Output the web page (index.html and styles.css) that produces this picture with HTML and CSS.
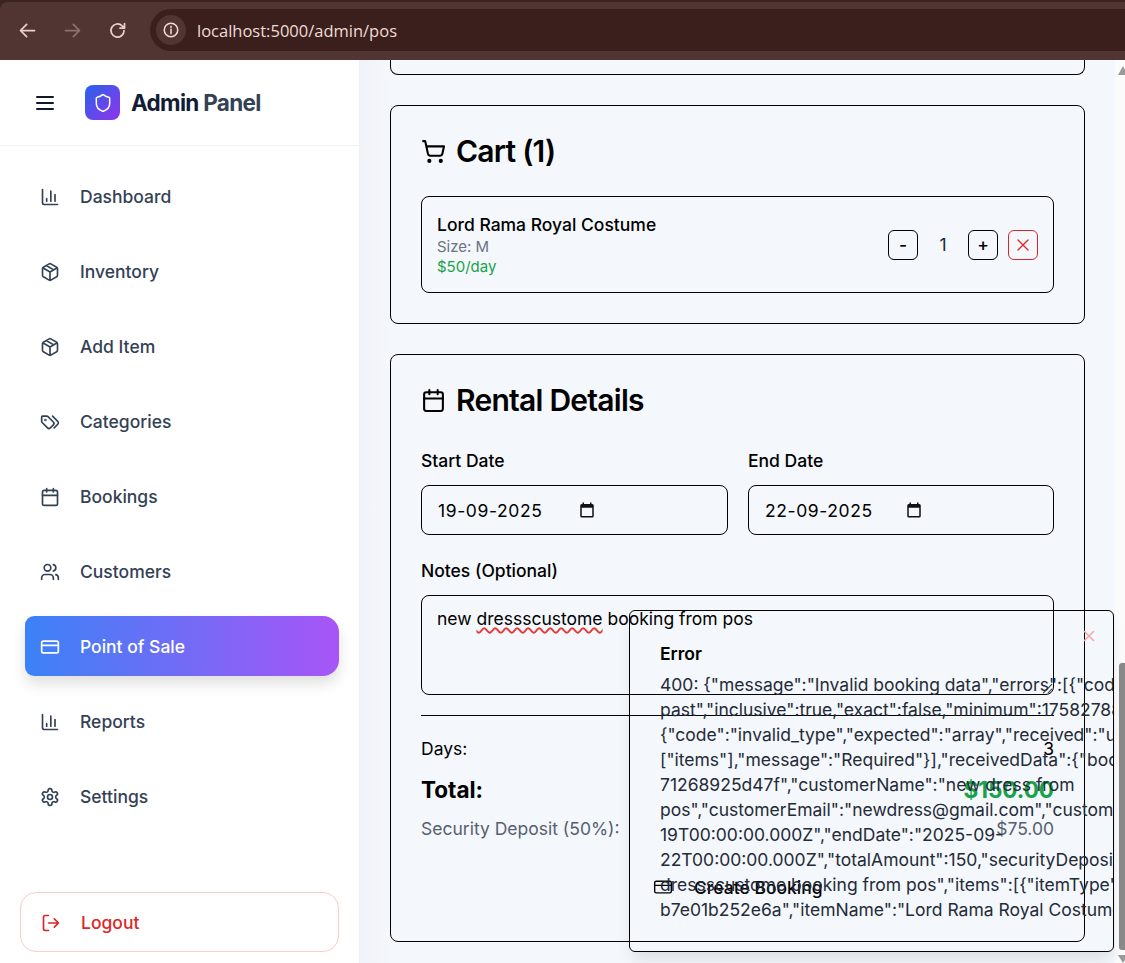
FILE: index.html
```html
<!DOCTYPE html>
<html lang="en">
<head>
    <meta charset="UTF-8">
    <meta name="viewport" content="width=device-width, initial-scale=1.0">
    <title>Point of Sale</title>
    <link rel="stylesheet" href="styles.css">
</head>
<body>

<div class="browserFrame">
    <div class="browserBar">
        <svg class="navIcon" viewBox="0 0 24 24"><path d="M20 12H4M11 5l-7 7 7 7"/></svg>
        <svg class="navIcon navIconOff" viewBox="0 0 24 24"><path d="M4 12h16M13 5l7 7-7 7"/></svg>
        <svg class="navIcon navIconLast" viewBox="0 0 24 24"><path d="M19.5 12a7.5 7.5 0 1 1-2.2-5.3L20 9.2M20 4v5.2h-5.2"/></svg>
        <div class="urlPill">
            <span class="infoBadge">
                <svg class="infoIcon" viewBox="0 0 24 24"><circle cx="12" cy="12" r="9"/><path d="M12 11v6M12 7v1.6"/></svg>
            </span>
            <span class="urlText">localhost:5000/admin/pos</span>
        </div>
    </div>
</div>

<div class="appShell">
    <aside class="sidebar">
        <div class="sideHead">
            <svg class="burger" viewBox="0 0 24 24"><path d="M4 6h16M4 12h16M4 18h16"/></svg>
            <span class="logoBox">
                <svg viewBox="0 0 24 24"><path d="M20 13c0 5-3.5 7.5-7.66 8.95a1 1 0 0 1-.67-.01C7.5 20.5 4 18 4 13V6a1 1 0 0 1 1-1c2 0 4.5-1.2 6.24-2.72a1.17 1.17 0 0 1 1.52 0C14.51 3.81 17 5 19 5a1 1 0 0 1 1 1z"/></svg>
            </span>
            <span class="brand">Admin <span class="brandSoft">Panel</span></span>
        </div>
        <nav class="sideNav">
            <a class="navItem"><svg viewBox="0 0 24 24"><path d="M3 3v16a2 2 0 0 0 2 2h16M18 17V9M13 17V5M8 17v-3"/></svg><span class="navLabel">Dashboard</span></a>
            <a class="navItem"><svg viewBox="0 0 24 24"><path d="M11 21.73a2 2 0 0 0 2 0l7-4A2 2 0 0 0 21 16V8a2 2 0 0 0-1-1.73l-7-4a2 2 0 0 0-2 0l-7 4A2 2 0 0 0 3 8v8a2 2 0 0 0 1 1.73zM12 22V12M3.3 7 12 12l8.7-5M7.5 4.27l9 5.15"/></svg><span class="navLabel">Inventory</span></a>
            <a class="navItem"><svg viewBox="0 0 24 24"><path d="M11 21.73a2 2 0 0 0 2 0l7-4A2 2 0 0 0 21 16V8a2 2 0 0 0-1-1.73l-7-4a2 2 0 0 0-2 0l-7 4A2 2 0 0 0 3 8v8a2 2 0 0 0 1 1.73zM12 22V12M3.3 7 12 12l8.7-5M7.5 4.27l9 5.15"/></svg><span class="navLabel">Add Item</span></a>
            <a class="navItem"><svg viewBox="0 0 24 24"><path d="m15 5 6.3 6.3a2.4 2.4 0 0 1 0 3.4L17 19"/><path d="M9.59 5.59A2 2 0 0 0 8.17 5H3a1 1 0 0 0-1 1v5.17a2 2 0 0 0 .59 1.42l6.42 6.42a2.43 2.43 0 0 0 3.42 0l3.58-3.58a2.43 2.43 0 0 0 0-3.42z"/><circle cx="6.5" cy="9.5" r=".5"/></svg><span class="navLabel">Categories</span></a>
            <a class="navItem"><svg viewBox="0 0 24 24"><rect x="3" y="4" width="18" height="18" rx="2"/><path d="M16 2v4M8 2v4M3 10h18"/></svg><span class="navLabel">Bookings</span></a>
            <a class="navItem"><svg viewBox="0 0 24 24"><path d="M16 21v-2a4 4 0 0 0-4-4H6a4 4 0 0 0-4 4v2"/><circle cx="9" cy="7" r="4"/><path d="M22 21v-2a4 4 0 0 0-3-3.87M16 3.13a4 4 0 0 1 0 7.75"/></svg><span class="navLabel">Customers</span></a>
            <a class="navItem navActive"><svg viewBox="0 0 24 24"><rect x="2" y="5" width="20" height="14" rx="2"/><path d="M2 10h20"/></svg><span class="navLabel">Point of Sale</span></a>
            <a class="navItem"><svg viewBox="0 0 24 24"><path d="M3 3v16a2 2 0 0 0 2 2h16M18 17V9M13 17V5M8 17v-3"/></svg><span class="navLabel">Reports</span></a>
            <a class="navItem"><svg viewBox="0 0 24 24"><path d="M12.22 2h-.44a2 2 0 0 0-2 2v.18a2 2 0 0 1-1 1.73l-.43.25a2 2 0 0 1-2 0l-.15-.08a2 2 0 0 0-2.73.73l-.22.38a2 2 0 0 0 .73 2.73l.15.1a2 2 0 0 1 1 1.72v.51a2 2 0 0 1-1 1.74l-.15.09a2 2 0 0 0-.73 2.73l.22.38a2 2 0 0 0 2.73.73l.15-.08a2 2 0 0 1 2 0l.43.25a2 2 0 0 1 1 1.73V20a2 2 0 0 0 2 2h.44a2 2 0 0 0 2-2v-.18a2 2 0 0 1 1-1.73l.43-.25a2 2 0 0 1 2 0l.15.08a2 2 0 0 0 2.73-.73l.22-.39a2 2 0 0 0-.73-2.73l-.15-.08a2 2 0 0 1-1-1.74v-.5a2 2 0 0 1 1-1.74l.15-.09a2 2 0 0 0 .73-2.73l-.22-.38a2 2 0 0 0-2.73-.73l-.15.08a2 2 0 0 1-2 0l-.43-.25a2 2 0 0 1-1-1.73V4a2 2 0 0 0-2-2z"/><circle cx="12" cy="12" r="3"/></svg><span class="navLabel">Settings</span></a>
        </nav>
        <a class="logoutBtn"><svg viewBox="0 0 24 24"><path d="M9 21H5a2 2 0 0 1-2-2V5a2 2 0 0 1 2-2h4M16 17l5-5-5-5M21 12H9"/></svg><span class="navLabel">Logout</span></a>
    </aside>

    <main class="content">
        <div class="card cardStub"></div>

        <section class="card cartCard">
            <h2 class="cardTitle">
                <svg viewBox="0 0 24 24"><circle cx="8" cy="21" r="1"/><circle cx="19" cy="21" r="1"/><path d="M2.05 2.05h2l2.66 12.42a2 2 0 0 0 2 1.58h9.78a2 2 0 0 0 1.95-1.57l1.65-7.43H5.12"/></svg>
                Cart (1)
            </h2>
            <div class="cartItem">
                <div class="itemInfo">
                    <div class="itemName">Lord Rama Royal Costume</div>
                    <div class="itemSize">Size: M</div>
                    <div class="itemPrice">$50/day</div>
                </div>
                <div class="itemControls">
                    <button class="qtyBtn">-</button>
                    <span class="qtyValue">1</span>
                    <button class="qtyBtn">+</button>
                    <button class="qtyBtn removeBtn"><svg viewBox="0 0 24 24"><path d="M18 6 6 18M6 6l12 12"/></svg></button>
                </div>
            </div>
        </section>

        <section class="card rentalCard">
            <h2 class="cardTitle">
                <svg viewBox="0 0 24 24"><rect x="3" y="4" width="18" height="18" rx="2"/><path d="M16 2v4M8 2v4M3 10h18"/></svg>
                Rental Details
            </h2>
            <div class="dateRow">
                <div class="field">
                    <label class="fieldLabel">Start Date</label>
                    <div class="dateBox">
                        <span class="dateText">19-09-2025</span>
                        <svg class="dateIcon" viewBox="0 0 24 24"><path d="M19 4h-1V2h-2v2H8V2H6v2H5a2 2 0 0 0-2 2v14a2 2 0 0 0 2 2h14a2 2 0 0 0 2-2V6a2 2 0 0 0-2-2zm0 16H5V9h14z"/></svg>
                    </div>
                </div>
                <div class="field">
                    <label class="fieldLabel">End Date</label>
                    <div class="dateBox">
                        <span class="dateText">22-09-2025</span>
                        <svg class="dateIcon" viewBox="0 0 24 24"><path d="M19 4h-1V2h-2v2H8V2H6v2H5a2 2 0 0 0-2 2v14a2 2 0 0 0 2 2h14a2 2 0 0 0 2-2V6a2 2 0 0 0-2-2zm0 16H5V9h14z"/></svg>
                    </div>
                </div>
            </div>
            <label class="fieldLabel">Notes (Optional)</label>
            <div class="notesBox">
                new <span class="misspelt">dressscustome</span> booking from pos
                <svg class="resizeGrip" viewBox="0 0 10 10"><path d="M9 2 2 9M9 6 6 9"/></svg>
            </div>
            <div class="summary">
                <div class="sumRow sumDays"><span>Days:</span><span>3</span></div>
                <div class="sumRow sumTotal"><span>Total:</span><span class="sumGreen">$150.00</span></div>
                <div class="sumRow sumDeposit"><span>Security Deposit (50%):</span><span>$75.00</span></div>
            </div>
            <div class="createBtn">
                <svg viewBox="0 0 24 24"><rect x="2" y="5" width="20" height="14" rx="2"/><path d="M2 10h20"/></svg>
                <span class="createLabel">Create Booking</span>
            </div>
        </section>
    </main>

    <div class="scrollTrack">
        <span class="arrowUp"></span>
        <span class="scrollThumb"></span>
        <span class="arrowDown"></span>
    </div>
</div>

<div class="toast">
    <svg class="toastClose" viewBox="0 0 24 24"><path d="M18 6 6 18M6 6l12 12"/></svg>
    <div class="toastTitle">Error</div>
    <div class="toastLine">400: {"message":"Invalid booking data","errors":[{"code":"too_small"</div>
    <div class="toastLine">past","inclusive":true,"exact":false,"minimum":1758278880000</div>
    <div class="toastLine">{"code":"invalid_type","expected":"array","received":"undefined"</div>
    <div class="toastLine">["items"],"message":"Required"}],"receivedData":{"bookingId"</div>
    <div class="toastLine">71268925d47f","customerName":"new dress from</div>
    <div class="toastLine">pos","customerEmail":"newdress@gmail.com","customerPhone"</div>
    <div class="toastLine">19T00:00:00.000Z","endDate":"2025-09-</div>
    <div class="toastLine">22T00:00:00.000Z","totalAmount":150,"securityDeposit":75</div>
    <div class="toastLine">dressscustome booking from pos","items":[{"itemType":"costume"</div>
    <div class="toastLine">b7e01b252e6a","itemName":"Lord Rama Royal Costume"</div>
</div>

</body>
</html>
```

FILE: styles.css
```css
* {
    box-sizing: border-box;
}

body {
    font-family: 'Inter', sans-serif;
    margin: 0;
    height: 963px;
    overflow: hidden;
    color: #000;
    background-color: #f4f7fb;
}

svg {
    fill: none;
    stroke: currentColor;
    stroke-width: 2;
    stroke-linecap: round;
    stroke-linejoin: round;
    flex-shrink: 0;
}

/* browser chrome */
.browserFrame {
    background-color: #3a2320;
    padding-top: 2px;
}

.browserBar {
    height: 58px;
    background-color: #513533;
    border-radius: 8px 0 0 0;
    display: flex;
    align-items: center;
    padding: 0 0 2px 17px;
}

.navIcon {
    width: 21px;
    height: 21px;
    color: #eccfc8;
    margin-right: 24px;
}

.navIconOff {
    color: #8f706b;
}

.navIconLast {
    margin-right: 22px;
}

.urlPill {
    flex: 1;
    height: 42px;
    border-radius: 21px 0 0 21px;
    background-color: #3a1f1c;
    display: flex;
    align-items: center;
    padding-left: 6px;
}

.infoBadge {
    width: 30px;
    height: 30px;
    border-radius: 50%;
    background-color: #513533;
    display: flex;
    align-items: center;
    justify-content: center;
}

.infoIcon {
    width: 18px;
    height: 18px;
    color: #f3dcd6;
}

.urlText {
    font-family: 'Open Sans', sans-serif;
    font-size: 16.5px;
    color: #f0dcd7;
    margin-left: 11px;
}

.appShell {
    display: flex;
    height: 903px;
}

/* sidebar */
.sidebar {
    width: 360px;
    background-color: #fff;
    border-right: 1px solid #eef0f4;
    display: flex;
    flex-direction: column;
    padding-bottom: 11px;
    flex-shrink: 0;
}

.sideHead {
    height: 86px;
    border-bottom: 1px solid #eef1f5;
    display: flex;
    align-items: center;
    padding-left: 33px;
}

.burger {
    width: 24px;
    height: 24px;
    color: #111827;
}

.logoBox {
    width: 35px;
    height: 35px;
    margin-left: 28px;
    border-radius: 8px;
    background: linear-gradient(135deg, #2563eb, #9333ea);
    color: #fff;
    display: flex;
    align-items: center;
    justify-content: center;
}

.logoBox svg {
    width: 20px;
    height: 20px;
    stroke-width: 1.8;
}

.brand {
    margin-left: 11px;
    font-size: 22.5px;
    font-weight: 700;
    letter-spacing: -0.7px;
    color: #111c36;
}

.brandSoft {
    color: #334155;
}

.sideNav {
    padding: 21px 20px 0 20px;
    display: flex;
    flex-direction: column;
    gap: 15px;
    flex: 1;
}

.navItem {
    height: 60px;
    border-radius: 16px;
    padding-left: 20px;
    display: flex;
    align-items: center;
    gap: 20px;
    font-size: 17.5px;
    font-weight: 500;
    color: #334155;
}

.navItem svg {
    width: 20px;
    height: 20px;
}

.navLabel {
    line-height: 20px;
    margin-top: -1px;
}

.navActive {
    margin: -1px 0 1px 5px;
    padding: 2px 0 0 15px;
    border-radius: 9px 16px 16px 9px;
    background: linear-gradient(90deg, #3b82f6, #a855f7);
    color: #fff;
    box-shadow: 0 8px 14px rgba(0, 0, 0, 0.12);
}

.logoutBtn {
    height: 60px;
    margin: 0 20px;
    border: 1px solid #fecaca;
    border-radius: 16px;
    padding: 2px 0 0 20px;
    display: flex;
    align-items: center;
    gap: 20px;
    font-size: 17.5px;
    font-weight: 500;
    color: #dc2626;
}

.logoutBtn svg {
    width: 20px;
    height: 20px;
}

/* main column */
.content {
    flex: 1;
    padding: 0 30px 0 30px;
    display: flex;
    flex-direction: column;
    gap: 30px;
    background: linear-gradient(90deg, #f1f3f8, #f4f7fb 30px);
}

.card {
    width: 695px;
    border: 1px solid #000;
    border-radius: 8px;
}

.cardStub {
    height: 15px;
    border-top: none;
    border-radius: 0 0 8px 8px;
}

.cartCard {
    height: 219px;
    padding: 30px;
}

.rentalCard {
    height: 588px;
    padding: 30px;
    position: relative;
}

.cardTitle {
    margin: 0;
    height: 30px;
    display: flex;
    align-items: center;
    gap: 10px;
    font-size: 30px;
    font-weight: 600;
    letter-spacing: -0.75px;
}

.cardTitle svg {
    width: 25px;
    height: 25px;
}

.cartItem {
    margin-top: 30px;
    height: 97px;
    border: 1px solid #000;
    border-radius: 8px;
    padding: 0 15px;
    display: flex;
    align-items: center;
    justify-content: space-between;
}

.itemName {
    font-size: 17.5px;
    font-weight: 500;
    line-height: 24px;
}

.itemSize {
    font-size: 15px;
    line-height: 20px;
    color: #6b7280;
}

.itemPrice {
    font-size: 15px;
    line-height: 20px;
    color: #16a34a;
}

.itemControls {
    display: flex;
    align-items: center;
    gap: 10px;
}

.qtyBtn {
    width: 30px;
    height: 30px;
    padding: 0;
    border: 1px solid #000;
    border-radius: 6px;
    background: transparent;
    font-family: 'Inter', sans-serif;
    font-size: 17.5px;
    font-weight: 500;
    color: #000;
    display: flex;
    align-items: center;
    justify-content: center;
}

.qtyValue {
    width: 30px;
    text-align: center;
    font-size: 17.5px;
    color: #1f2937;
}

.removeBtn {
    border-color: #dc2626;
    color: #dc2626;
}

.removeBtn svg {
    width: 20px;
    height: 20px;
    stroke-width: 1.6;
}

.rentalCard .cardTitle {
    margin-bottom: 36px;
}

.dateRow {
    display: grid;
    grid-template-columns: 307px 306px;
    gap: 20px;
    margin-bottom: 26px;
}

.fieldLabel {
    display: block;
    font-size: 17.5px;
    font-weight: 500;
    line-height: 20px;
}

.dateBox {
    margin-top: 14px;
    height: 50px;
    border: 1px solid #000;
    border-radius: 8px;
    padding-left: 16px;
    display: flex;
    align-items: center;
}

.dateText {
    font-size: 17.5px;
    letter-spacing: 0.6px;
    width: 140px;
}

.dateIcon {
    width: 18px;
    height: 18px;
    fill: #111;
    stroke: none;
}

.notesBox {
    margin-top: 14px;
    height: 100px;
    border: 1px solid #000;
    border-radius: 8px;
    padding: 12px 15px;
    font-size: 17.5px;
    line-height: 22px;
    position: relative;
}

.misspelt {
    text-decoration: underline wavy #e53935 1.5px;
    text-underline-offset: 2px;
}

.resizeGrip {
    position: absolute;
    right: 0;
    bottom: 0;
    width: 12px;
    height: 12px;
    stroke-width: 1;
    color: #444;
}

.summary {
    margin-top: 20px;
    border-top: 1px solid #000;
    padding-top: 21px;
}

.sumRow {
    display: flex;
    justify-content: space-between;
    align-items: center;
}

.sumDays {
    font-size: 17.5px;
    line-height: 24px;
}

.sumTotal {
    margin-top: 13px;
    font-size: 22.5px;
    font-weight: 700;
    line-height: 32px;
}

.sumGreen {
    color: #16a34a;
}

.sumDeposit {
    margin-top: 11px;
    font-size: 17.5px;
    line-height: 24px;
    color: #565f70;
}

.createBtn {
    position: absolute;
    left: 262px;
    top: 520px;
    display: flex;
    align-items: center;
    gap: 21px;
    font-size: 17.5px;
    font-weight: 500;
    line-height: 20px;
}

.createBtn svg {
    width: 20px;
    height: 20px;
    stroke-width: 1.7;
}

.createLabel {
    margin-top: 3px;
}

/* page scrollbar */
.scrollTrack {
    width: 10px;
    flex-shrink: 0;
    background-color: #fbfbfb;
    display: flex;
    flex-direction: column;
    overflow: hidden;
}

.arrowUp {
    margin: 6px 0 0 3px;
    width: 0;
    height: 0;
    border-left: 5px solid transparent;
    border-right: 5px solid transparent;
    border-bottom: 9px solid #9a9a9a;
}

.scrollThumb {
    margin: auto 0 0 4px;
    width: 6px;
    height: 287px;
    border-radius: 3px 0 0 3px;
    background-color: #8a8a8a;
}

.arrowDown {
    margin: 5px 0 0 3px;
    width: 0;
    height: 0;
    border-left: 5px solid transparent;
    border-right: 5px solid transparent;
    border-top: 8px solid #9a9a9a;
}

/* toast sits over the page, transparent as in the capture */
.toast {
    position: absolute;
    left: 629px;
    top: 610px;
    width: 485px;
    height: 342px;
    border: 1px solid #000;
    border-radius: 6px;
    padding: 32px 0 0 30px;
    overflow: hidden;
    box-shadow: 0 10px 15px -3px rgba(0, 0, 0, 0.1);
}

.toastClose {
    position: absolute;
    right: 15px;
    top: 16px;
    width: 18px;
    height: 18px;
    color: #fca5a5;
}

.toastTitle {
    font-size: 17.5px;
    font-weight: 600;
    line-height: 22px;
    margin-bottom: 7px;
}

.toastLine {
    font-size: 17.5px;
    line-height: 25px;
    white-space: nowrap;
    color: #232b38;
}
```
